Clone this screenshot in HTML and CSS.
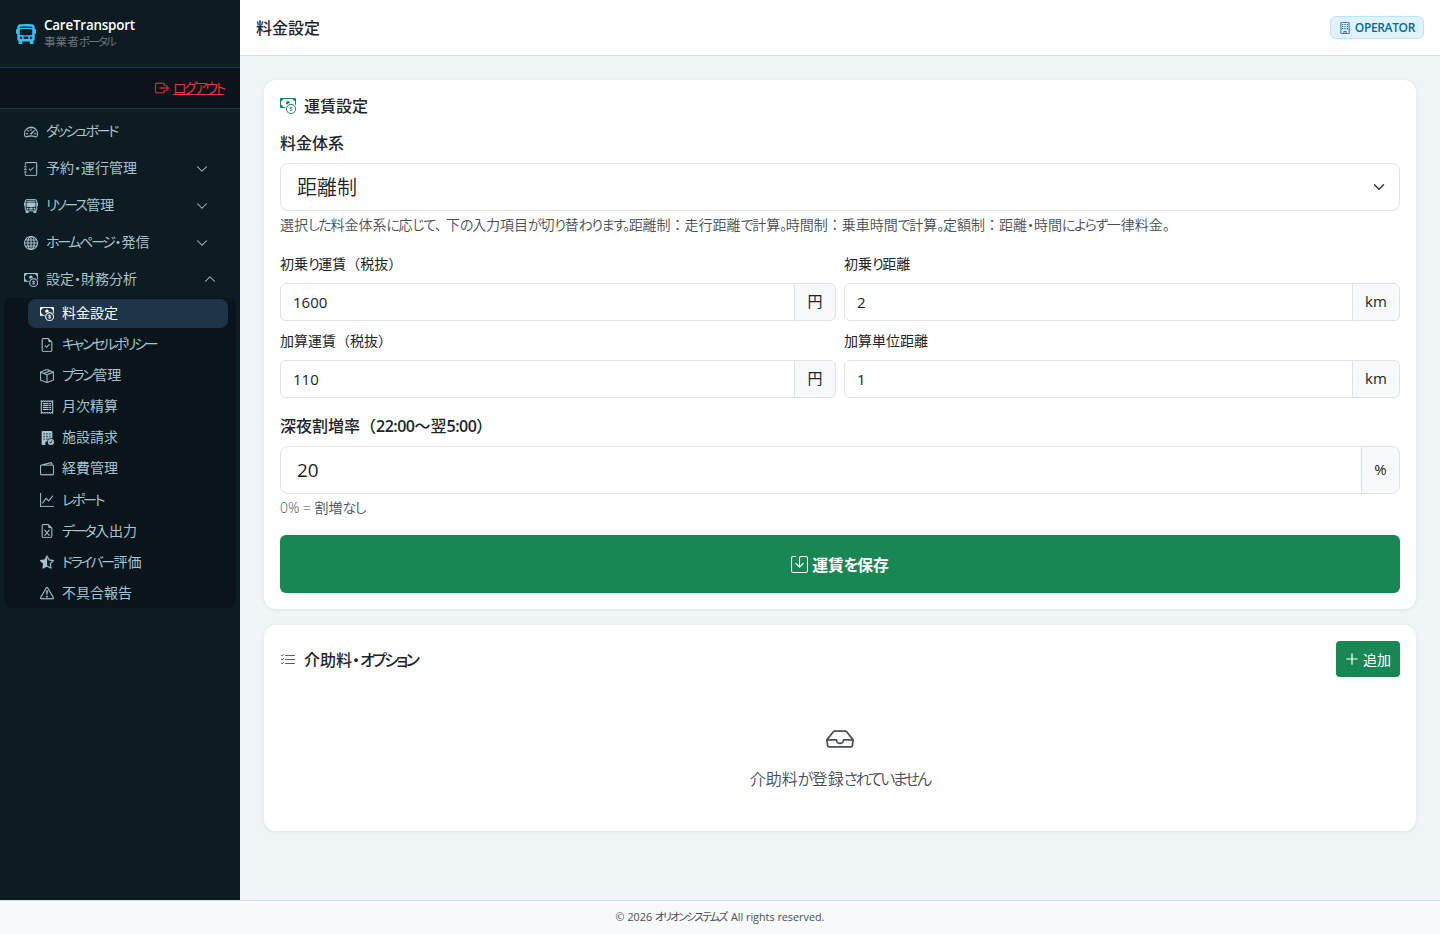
FILE: index.html
```
<!DOCTYPE html>
<html lang="ja">
  <head>
    <meta charset="UTF-8" />
    <meta name="viewport" content="width=device-width, initial-scale=1.0" />
    <title>料金設定 - CareTransport</title>
    <link rel="stylesheet" href="styles.css">
  </head>
  <body>
    <svg class="sprite" aria-hidden="true">
      <symbol id="bus-fill" viewBox="0 0 16 16"><path d="M16 7a1 1 0 0 1-1 1v3.5c0 .818-.393 1.544-1 2v2a.5.5 0 0 1-.5.5h-2a.5.5 0 0 1-.5-.5V14H5v1.5a.5.5 0 0 1-.5.5h-2a.5.5 0 0 1-.5-.5v-2a2.5 2.5 0 0 1-1-2V8a1 1 0 0 1-1-1V5a1 1 0 0 1 1-1V2.64C1 1.452 1.845.408 3.064.268A44 44 0 0 1 8 0c2.1 0 3.792.136 4.936.268C14.155.408 15 1.452 15 2.64V4a1 1 0 0 1 1 1zM3.552 3.22A43 43 0 0 1 8 3c1.837 0 3.353.107 4.448.22a.5.5 0 0 0 .104-.994A44 44 0 0 0 8 2c-1.876 0-3.426.109-4.552.226a.5.5 0 1 0 .104.994M8 4c-1.876 0-3.426.109-4.552.226A.5.5 0 0 0 3 4.723v3.554a.5.5 0 0 0 .448.497C4.574 8.891 6.124 9 8 9s3.426-.109 4.552-.226A.5.5 0 0 0 13 8.277V4.723a.5.5 0 0 0-.448-.497A44 44 0 0 0 8 4m-3 7a1 1 0 1 0-2 0 1 1 0 0 0 2 0m8 0a1 1 0 1 0-2 0 1 1 0 0 0 2 0m-7 0a1 1 0 0 0 1 1h2a1 1 0 1 0 0-2H7a1 1 0 0 0-1 1"/></symbol>
      <symbol id="bus" viewBox="0 0 16 16"><path d="M5 11a1 1 0 1 1-2 0 1 1 0 0 1 2 0m8 0a1 1 0 1 1-2 0 1 1 0 0 1 2 0m-6-1a1 1 0 1 0 0 2h2a1 1 0 1 0 0-2zm1-6c-1.876 0-3.426.109-4.552.226A.5.5 0 0 0 3 4.723v3.554a.5.5 0 0 0 .448.497C4.574 8.891 6.124 9 8 9s3.426-.109 4.552-.226A.5.5 0 0 0 13 8.277V4.723a.5.5 0 0 0-.448-.497A44 44 0 0 0 8 4m0-1c-1.837 0-3.353.107-4.448.22a.5.5 0 1 1-.104-.994A44 44 0 0 1 8 2c1.876 0 3.426.109 4.552.226a.5.5 0 1 1-.104.994A43 43 0 0 0 8 3"/><path d="M15 8a1 1 0 0 0 1-1V5a1 1 0 0 0-1-1V2.64c0-1.188-.845-2.232-2.064-2.372A44 44 0 0 0 8 0C5.9 0 4.208.136 3.064.268 1.845.408 1 1.452 1 2.64V4a1 1 0 0 0-1 1v2a1 1 0 0 0 1 1v3.5c0 .818.393 1.544 1 2v2a.5.5 0 0 0 .5.5h2a.5.5 0 0 0 .5-.5V14h6v1.5a.5.5 0 0 0 .5.5h2a.5.5 0 0 0 .5-.5v-2c.607-.456 1-1.182 1-2zM8 1c2.056 0 3.71.134 4.822.261.676.078 1.178.66 1.178 1.379v8.86a1.5 1.5 0 0 1-1.5 1.5h-9A1.5 1.5 0 0 1 2 11.5V2.64c0-.72.502-1.301 1.178-1.379A43 43 0 0 1 8 1"/></symbol>
      <symbol id="logout" viewBox="0 0 16 16"><path d="M10 12.5a.5.5 0 0 1-.5.5h-8a.5.5 0 0 1-.5-.5v-9a.5.5 0 0 1 .5-.5h8a.5.5 0 0 1 .5.5v2a.5.5 0 0 0 1 0v-2A1.5 1.5 0 0 0 9.5 2h-8A1.5 1.5 0 0 0 0 3.5v9A1.5 1.5 0 0 0 1.5 14h8a1.5 1.5 0 0 0 1.5-1.5v-2a.5.5 0 0 0-1 0z"/><path d="M15.854 8.354a.5.5 0 0 0 0-.708l-3-3a.5.5 0 0 0-.708.708L14.293 7.5H5.5a.5.5 0 0 0 0 1h8.793l-2.147 2.146a.5.5 0 0 0 .708.708z"/></symbol>
      <symbol id="speed" viewBox="0 0 16 16"><path d="M8 4a.5.5 0 0 1 .5.5V6a.5.5 0 0 1-1 0V4.5A.5.5 0 0 1 8 4M3.732 5.732a.5.5 0 0 1 .707 0l.915.914a.5.5 0 1 1-.708.708l-.914-.915a.5.5 0 0 1 0-.707M2 10a.5.5 0 0 1 .5-.5h1.586a.5.5 0 0 1 0 1H2.5A.5.5 0 0 1 2 10m9.5 0a.5.5 0 0 1 .5-.5h1.5a.5.5 0 0 1 0 1H12a.5.5 0 0 1-.5-.5m.754-4.246a.39.39 0 0 0-.527-.02L7.547 9.31a.91.91 0 1 0 1.302 1.258l3.434-4.297a.39.39 0 0 0-.029-.518z"/><path fill-rule="evenodd" d="M0 10a8 8 0 1 1 15.547 2.661c-.442 1.253-1.845 1.602-2.932 1.25C11.309 13.488 9.475 13 8 13c-1.474 0-3.31.488-4.615.911-1.087.352-2.49.003-2.932-1.25A8 8 0 0 1 0 10m8-7a7 7 0 0 0-6.603 9.329c.203.575.923.876 1.68.63C4.397 12.533 6.358 12 8 12s3.604.532 4.923.96c.757.245 1.477-.056 1.68-.631A7 7 0 0 0 8 3"/></symbol>
      <symbol id="journal" viewBox="0 0 16 16"><path d="M10.854 6.146a.5.5 0 0 1 0 .708l-3 3a.5.5 0 0 1-.708 0l-1.5-1.5a.5.5 0 1 1 .708-.708L7.5 8.793l2.646-2.647a.5.5 0 0 1 .708 0"/><path d="M3 0h10a2 2 0 0 1 2 2v12a2 2 0 0 1-2 2H3a2 2 0 0 1-2-2v-1h1v1a1 1 0 0 0 1 1h10a1 1 0 0 0 1-1V2a1 1 0 0 0-1-1H3a1 1 0 0 0-1 1v1H1V2a2 2 0 0 1 2-2"/><path d="M1 5v-.5a.5.5 0 0 1 1 0V5h.5a.5.5 0 0 1 0 1h-2a.5.5 0 0 1 0-1zm0 3v-.5a.5.5 0 0 1 1 0V8h.5a.5.5 0 0 1 0 1h-2a.5.5 0 0 1 0-1zm0 3v-.5a.5.5 0 0 1 1 0v.5h.5a.5.5 0 0 1 0 1h-2a.5.5 0 0 1 0-1z"/></symbol>
      <symbol id="globe" viewBox="0 0 16 16"><g fill="none" stroke="currentColor" stroke-width="1.2"><circle cx="8" cy="8" r="7.4"/><ellipse cx="8" cy="8" rx="3.7" ry="7.4"/><path d="M8 .5v15M.5 8h15M1.7 4.5h12.6M1.7 11.5h12.6"/></g></symbol>
      <symbol id="cash" viewBox="0 0 16 16"><path fill-rule="evenodd" d="M11 15a4 4 0 1 0 0-8 4 4 0 0 0 0 8m5-4a5 5 0 1 1-10 0 5 5 0 0 1 10 0"/><path d="M9.438 11.944c.047.596.518 1.06 1.363 1.116v.44h.375v-.443c.875-.061 1.386-.529 1.386-1.207 0-.618-.39-.936-1.09-1.1l-.296-.07v-1.2c.376.043.614.248.671.532h.658c-.047-.575-.54-1.024-1.329-1.073V8.5h-.375v.45c-.747.073-1.255.522-1.255 1.158 0 .562.378.92 1.007 1.066l.248.061v1.272c-.384-.058-.639-.27-.696-.563h-.668zm1.36-1.354c-.369-.085-.569-.26-.569-.522 0-.294.216-.514.572-.578v1.1zm.432.746c.449.104.655.272.655.569 0 .339-.257.571-.709.614v-1.195z"/><path d="M1 0a1 1 0 0 0-1 1v8a1 1 0 0 0 1 1h4.083q.088-.517.258-1H3a2 2 0 0 0-2-2V3a2 2 0 0 0 2-2h10a2 2 0 0 0 2 2v3.528c.38.34.717.728 1 1.154V1a1 1 0 0 0-1-1z"/><path d="M9.998 5.083 10 5a2 2 0 1 0-3.132 1.65 6 6 0 0 1 3.13-1.567"/></symbol>
      <symbol id="file-check" viewBox="0 0 16 16"><path d="M10.854 7.854a.5.5 0 0 0-.708-.708L7.5 9.793 6.354 8.646a.5.5 0 1 0-.708.708l1.5 1.5a.5.5 0 0 0 .708 0z"/><path d="M14 14V4.5L9.5 0H4a2 2 0 0 0-2 2v12a2 2 0 0 0 2 2h8a2 2 0 0 0 2-2M9.5 3A1.5 1.5 0 0 0 11 4.5h2V14a1 1 0 0 1-1 1H4a1 1 0 0 1-1-1V2a1 1 0 0 1 1-1h5.5z"/></symbol>
      <symbol id="file-excel" viewBox="0 0 16 16"><path d="M5.884 6.68a.5.5 0 1 0-.768.64L7.349 10l-2.233 2.68a.5.5 0 0 0 .768.64L8 10.781l2.116 2.54a.5.5 0 0 0 .768-.641L8.651 10l2.233-2.68a.5.5 0 0 0-.768-.64L8 9.219l-2.116-2.54z"/><path d="M14 14V4.5L9.5 0H4a2 2 0 0 0-2 2v12a2 2 0 0 0 2 2h8a2 2 0 0 0 2-2M9.5 3A1.5 1.5 0 0 0 11 4.5h2V14a1 1 0 0 1-1 1H4a1 1 0 0 1-1-1V2a1 1 0 0 1 1-1h5.5z"/></symbol>
      <symbol id="box" viewBox="0 0 16 16"><path d="M8.186 1.113a.5.5 0 0 0-.372 0L1.846 3.5l2.404.961L10.404 2zm3.564 1.426L5.596 5 8 5.961 14.154 3.5zm3.25 1.7-6.5 2.6v7.922l6.5-2.6V4.24zM7.5 14.762V6.838L1 4.239v7.923zM7.443.184a1.5 1.5 0 0 1 1.114 0l7.129 2.852A.5.5 0 0 1 16 3.5v8.662a1 1 0 0 1-.629.928l-7.185 2.874a.5.5 0 0 1-.372 0L.63 13.09a1 1 0 0 1-.63-.928V3.5a.5.5 0 0 1 .314-.464z"/></symbol>
      <symbol id="receipt" viewBox="0 0 16 16"><path fill="none" stroke="currentColor" stroke-width="1.3" d="M1.5 1l1 .8 1.4-.8 1.4.8 1.4-.8 1.3.8 1.3-.8 1.4.8 1.4-.8 1.4.8 1-.8v14l-1-.8-1.4.8-1.4-.8-1.4.8-1.3-.8-1.3.8-1.4-.8-1.4.8-1.4-.8-1 .8z"/><path d="M3.4 3.43h6.3v1.14H3.4zm0 2.28h6.3v1.15H3.4zm0 2.29h6.3v1.14H3.4zm0 2.29h6.3v1.14H3.4zM10.6 3.43h2v1.14h-2zm0 2.28h2v1.15h-2zm0 2.29h2v1.14h-2zm0 2.29h2v1.14h-2z"/></symbol>
      <symbol id="building" viewBox="0 0 16 16"><path fill="none" stroke="currentColor" stroke-width="1.2" d="M2.5 1A.5.5 0 0 1 3 .5h10a.5.5 0 0 1 .5.5v14a.5.5 0 0 1-.5.5H3a.5.5 0 0 1-.5-.5zM6.5 15v-2.500h3V15"/><path d="M4 2.500h1.700V4H4zm3.200 0h1.700V4H7.200zm3.200 0H12V4h-1.600zM4 5.200h1.700v1.500H4zm3.200 0h1.700v1.500H7.200zm3.200 0H12v1.500h-1.600zM4 8h1.700v1.500H4zm3.200 0h1.700v1.500H7.200zm3.200 0H12v1.500h-1.600z"/></symbol>
      <symbol id="building-check" viewBox="0 0 16 16"><path fill-rule="evenodd" d="M3 0a1 1 0 0 0-1 1v14a1 1 0 0 0 1 1h3v-3.500a.5.5 0 0 1 .5-.5H8A4.500 4.500 0 0 1 14 8.300V1a1 1 0 0 0-1-1zM4 2.500h1.500V4H4zm3.200 0h1.600V4H7.200zm3.300 0H12V4h-1.500zM4 5.500h1.500V7H4zm3.200 0h1.600V7H7.200zm3.300 0H12V7h-1.500zM4 8.500h1.500V10H4zm3.200 0h1.600V10H7.200z"/><path fill-rule="evenodd" d="M12.500 16a3.500 3.500 0 1 0 0-7 3.500 3.500 0 0 0 0 7m1.679-4.493-1.335 2.226a.75.75 0 0 1-1.174.144l-.774-.773a.5.5 0 0 1 .708-.708l.547.548 1.170-1.951a.5.5 0 1 1 .858.514"/></symbol>
      <symbol id="wallet" viewBox="0 0 16 16"><path d="M12.136.326A1.5 1.5 0 0 1 14 1.78V3h.5A1.5 1.5 0 0 1 16 4.5v9a1.5 1.5 0 0 1-1.5 1.5h-13A1.5 1.5 0 0 1 0 13.5v-9a1.5 1.5 0 0 1 1.432-1.499zM5.562 3H13V1.78a.5.5 0 0 0-.621-.484zM1.5 4a.5.5 0 0 0-.5.5v9a.5.5 0 0 0 .5.5h13a.5.5 0 0 0 .5-.5v-9a.5.5 0 0 0-.5-.5z"/></symbol>
      <symbol id="graph" viewBox="0 0 16 16"><path fill-rule="evenodd" d="M0 0h1v15h15v1H0zm14.817 3.113a.5.5 0 0 1 .07.704l-4.5 5.5a.5.5 0 0 1-.74.037L7.06 6.767l-3.656 5.027a.5.5 0 0 1-.808-.588l4-5.5a.5.5 0 0 1 .758-.06l2.609 2.61 4.15-5.073a.5.5 0 0 1 .704-.07"/></symbol>
      <symbol id="star" viewBox="0 0 16 16"><path d="M5.354 5.119 7.538.792A.52.52 0 0 1 8 .5c.183 0 .366.097.465.292l2.184 4.327 4.898.696A.54.54 0 0 1 16 6.32a.55.55 0 0 1-.17.445l-3.523 3.356.83 4.73c.078.443-.36.79-.746.592L8 13.187l-4.389 2.256a.5.5 0 0 1-.146.05c-.342.06-.668-.254-.6-.642l.83-4.73L.173 6.765a.55.55 0 0 1-.172-.403.6.6 0 0 1 .085-.302.51.51 0 0 1 .37-.245zM8 12.027a.5.5 0 0 1 .232.056l3.686 1.894-.694-3.957a.56.56 0 0 1 .162-.505l2.907-2.77-4.052-.576a.53.53 0 0 1-.393-.288L8.001 2.223 8 2.226z"/></symbol>
      <symbol id="warning" viewBox="0 0 16 16"><path d="M7.938 2.016A.13.13 0 0 1 8.002 2a.13.13 0 0 1 .063.016.15.15 0 0 1 .054.057l6.857 11.667c.036.06.035.124.002.183a.2.2 0 0 1-.054.06.1.1 0 0 1-.066.017H1.146a.1.1 0 0 1-.066-.017.2.2 0 0 1-.054-.06.18.18 0 0 1 .002-.183L7.884 2.073a.15.15 0 0 1 .054-.057m1.044-.45a1.13 1.13 0 0 0-1.96 0L.165 13.233c-.457.778.091 1.767.98 1.767h13.713c.889 0 1.438-.99.98-1.767z"/><path d="M7.002 12a1 1 0 1 1 2 0 1 1 0 0 1-2 0M7.1 5.995a.905.905 0 1 1 1.8 0l-.35 3.507a.552.552 0 0 1-1.1 0z"/></symbol>
      <symbol id="chevron" viewBox="0 0 16 16"><path fill="none" stroke="currentColor" stroke-linecap="round" stroke-linejoin="round" d="m2 5 6 6 6-6"/></symbol>
      <symbol id="save" viewBox="0 0 16 16"><path d="M2 1a1 1 0 0 0-1 1v12a1 1 0 0 0 1 1h12a1 1 0 0 0 1-1V2a1 1 0 0 0-1-1H9.5a1 1 0 0 0-1 1v7.293l2.646-2.647a.5.5 0 0 1 .708.708l-3.5 3.5a.5.5 0 0 1-.708 0l-3.5-3.5a.5.5 0 1 1 .708-.708L7.5 9.293V2a2 2 0 0 1 2-2H14a2 2 0 0 1 2 2v12a2 2 0 0 1-2 2H2a2 2 0 0 1-2-2V2a2 2 0 0 1 2-2h2.5a.5.5 0 0 1 0 1z"/></symbol>
      <symbol id="list-check" viewBox="0 0 16 16"><path fill="none" stroke="currentColor" stroke-linecap="round" stroke-linejoin="round" d="M5.5 3.5h9m-9 4h9m-9 4h9M1.5 3.500l.5.5 1.500-1.500m-2 5 .5.5 1.500-1.500m-2 5 .5.5 1.500-1.500"/></symbol>
      <symbol id="plus" viewBox="0 0 16 16"><path fill="none" stroke="currentColor" stroke-width="1.4" stroke-linecap="round" d="M8 2v12M2 8h12"/></symbol>
      <symbol id="inbox" viewBox="0 0 16 16"><path d="M4.98 4a.5.5 0 0 0-.39.188L1.54 8H6a.5.5 0 0 1 .5.5 1.5 1.5 0 1 0 3 0A.5.5 0 0 1 10 8h4.46l-3.05-3.812A.5.5 0 0 0 11.02 4zm9.954 5H10.45a2.5 2.5 0 0 1-4.9 0H1.066l.32 2.562a.5.5 0 0 0 .497.438h12.234a.5.5 0 0 0 .496-.438zM3.809 3.563A1.5 1.5 0 0 1 4.981 3h6.038a1.5 1.5 0 0 1 1.172.563l3.7 4.625a.5.5 0 0 1 .105.374l-.39 3.124A1.5 1.5 0 0 1 14.117 13H1.883a1.5 1.5 0 0 1-1.489-1.314l-.39-3.124a.5.5 0 0 1 .106-.374z"/></symbol>
    </svg>

    <div class="layout">
      <aside class="sidebar">
        <div class="brand">
          <svg class="brand-icon"><use href="#bus-fill"/></svg>
          <div>
            <div class="brand-name">CareTransport</div>
            <div class="brand-sub">事業者<span class="kana">ポータル</span></div>
          </div>
        </div>
        <div class="logout">
          <svg class="icon"><use href="#logout"/></svg>
          <a href="#" class="kana">ログアウト</a>
        </div>
        <nav class="nav">
          <a class="nav-item"><svg class="icon"><use href="#speed"/></svg><span class="kana">ダッシュボード</span></a>
          <a class="nav-item"><svg class="icon"><use href="#journal"/></svg><span>予約<span class="dot">・</span>運行管理</span><svg class="chevron"><use href="#chevron"/></svg></a>
          <a class="nav-item"><svg class="icon"><use href="#bus"/></svg><span><span class="kana">リソース</span>管理</span><svg class="chevron"><use href="#chevron"/></svg></a>
          <a class="nav-item"><svg class="icon"><use href="#globe"/></svg><span><span class="kana">ホームページ</span><span class="dot">・</span>発信</span><svg class="chevron"><use href="#chevron"/></svg></a>
          <a class="nav-item open"><svg class="icon"><use href="#cash"/></svg><span>設定<span class="dot">・</span>財務分析</span><svg class="chevron"><use href="#chevron"/></svg></a>
          <div class="subnav">
            <a class="sub-item active"><svg class="icon"><use href="#cash"/></svg><span>料金設定</span></a>
            <a class="sub-item"><svg class="icon"><use href="#file-check"/></svg><span class="kana">キャンセルポリシー</span></a>
            <a class="sub-item"><svg class="icon"><use href="#box"/></svg><span><span class="kana">プラン</span>管理</span></a>
            <a class="sub-item"><svg class="icon"><use href="#receipt"/></svg><span>月次精算</span></a>
            <a class="sub-item"><svg class="icon"><use href="#building-check"/></svg><span>施設請求</span></a>
            <a class="sub-item"><svg class="icon"><use href="#wallet"/></svg><span>経費管理</span></a>
            <a class="sub-item"><svg class="icon"><use href="#graph"/></svg><span class="kana">レポート</span></a>
            <a class="sub-item"><svg class="icon"><use href="#file-excel"/></svg><span><span class="kana">データ</span>入出力</span></a>
            <a class="sub-item"><svg class="icon"><use href="#star"/></svg><span><span class="kana">ドライバー</span>評価</span></a>
            <a class="sub-item"><svg class="icon"><use href="#warning"/></svg><span>不具合報告</span></a>
          </div>
        </nav>
      </aside>

      <div class="main">
        <header class="topbar">
          <h1>料金設定</h1>
          <span class="badge"><svg><use href="#building"/></svg>OPERATOR</span>
        </header>

        <main class="content">
          <form class="card fare-card">
            <h2 class="card-title"><svg><use href="#cash"/></svg>運賃設定</h2>

            <label class="label-lg">料金体系</label>
            <div class="select"><span>距離制</span><svg><use href="#chevron"/></svg></div>
            <p class="help help-long">選択<span class="hira">した</span>料金体系<span class="hira">に</span>応<span class="hira">じて</span><span class="comma">、</span>下<span class="hira">の</span>入力項目<span class="hira">が</span>切<span class="hira">り</span>替<span class="hira">わります。</span>距離制：走行距離<span class="hira">で</span>計算<span class="hira">。</span>時間制：乗車時間<span class="hira">で</span>計算<span class="hira">。</span>定額制：距離<span class="dot">・</span>時間<span class="hira">によらず</span>一律料金<span class="hira">。</span></p>

            <div class="fields">
              <div class="field">
                <label>初乗<span class="kana">り</span>運賃（税抜）</label>
                <div class="input-group"><input type="text" value="1600" /><span class="unit">円</span></div>
              </div>
              <div class="field">
                <label>初乗<span class="kana">り</span>距離</label>
                <div class="input-group"><input type="text" value="2" /><span class="unit unit-km">km</span></div>
              </div>
              <div class="field">
                <label>加算運賃（税抜）</label>
                <div class="input-group"><input type="text" value="110" /><span class="unit">円</span></div>
              </div>
              <div class="field">
                <label>加算単位距離</label>
                <div class="input-group"><input type="text" value="1" /><span class="unit unit-km">km</span></div>
              </div>
            </div>

            <label class="label-lg label-night">深夜割増率（<span class="time">22:00</span>～翌<span class="time">5:00</span>）</label>
            <div class="input-group input-group-lg"><input type="text" value="20" /><span class="unit unit-pct">%</span></div>
            <p class="help">0% = 割増<span class="hira">なし</span></p>

            <button type="button" class="btn btn-save"><svg><use href="#save"/></svg><span>運賃<span class="kana">を</span>保存</span></button>
          </form>

          <section class="card option-card">
            <div class="option-head">
              <h2 class="card-title"><svg><use href="#list-check"/></svg><span>介助料<span class="dot">・</span><span class="kana">オプション</span></span></h2>
              <button type="button" class="btn btn-add"><svg><use href="#plus"/></svg>追加</button>
            </div>
            <div class="empty">
              <svg><use href="#inbox"/></svg>
              <p>介助料<span class="kana">が</span>登録<span class="kana">されていません</span></p>
            </div>
          </section>
        </main>
      </div>
    </div>

    <footer class="footer">© 2026 <span class="kana">オリオンシステムズ</span> All rights reserved.</footer>
  </body>
</html>
```
FILE: styles.css
```
* {
  box-sizing: border-box;
}
body {
  margin: 0;
  font-family: "Open Sans", "Noto Sans CJK JP", sans-serif;
  font-size: 16px;
  line-height: 1.5;
  color: #212529;
  background: #eff4f7;
}
h1,
h2,
p {
  margin: 0;
}
svg {
  fill: currentColor;
  flex: none;
}
.sprite {
  display: none;
}
.kana {
  font-feature-settings: "palt";
  letter-spacing: -0.165em;
  margin-right: 0.06em;
}
.hira {
  font-feature-settings: "palt";
  letter-spacing: -0.1em;
}
.comma {
  letter-spacing: -0.2em;
}
.dot {
  font-feature-settings: "palt";
  letter-spacing: 0;
}
.layout {
  display: flex;
  height: 900px;
}

/* Sidebar */
.sidebar {
  width: 240px;
  background: #0d1b22;
  color: #a5c4cf;
}
.brand {
  display: flex;
  align-items: center;
  gap: 8px;
  height: 68px;
  padding: 0 16px;
  border-bottom: 1px solid #1e3447;
}
.brand-icon {
  width: 20px;
  height: 20px;
  color: #38bdf8;
}
.brand-name {
  font-size: 13.4px;
  font-weight: 600;
  line-height: 17px;
  letter-spacing: -0.2px;
  color: #fff;
}
.brand-sub {
  font-size: 11.6px;
  line-height: 16px;
  color: #6c757d;
}
.logout {
  display: flex;
  align-items: center;
  justify-content: flex-end;
  gap: 4px;
  height: 41px;
  padding: 0 15px 1px 16px;
  background: #0a141a;
  border-bottom: 1px solid #1e3447;
  font-size: 14px;
  color: #dc3545;
}
.logout a {
  color: inherit;
}
.icon {
  width: 14px;
  height: 14px;
  stroke: currentColor;
  stroke-width: 0.25;
}
.nav {
  padding: 4px;
}
.nav-item {
  display: flex;
  align-items: center;
  gap: 8px;
  height: 37px;
  padding: 0 28px 0 20px;
  font-size: 14px;
}
.nav-item > span,
.sub-item > span {
  padding-bottom: 2px;
}
.chevron {
  width: 12px;
  height: 12px;
  margin-left: auto;
  stroke-width: 1.4;
}
.open {
  padding-right: 20px;
}
.open .chevron {
  margin-bottom: 2px;
  transform: rotate(180deg);
}
.subnav {
  padding: 1px 8px 0 24px;
  background: #09151b;
  border-radius: 6px;
}
.sub-item {
  display: flex;
  align-items: center;
  gap: 8px;
  height: 29px;
  margin-bottom: 2.1px;
  padding: 0 12px;
  border-radius: 8px;
  font-size: 14px;
}
.sub-item.active {
  background: #1e3548;
  color: #fff;
}

/* Top bar */
.main {
  flex: 1;
}
.topbar {
  display: flex;
  align-items: center;
  justify-content: space-between;
  height: 56px;
  padding: 0 16px;
  background: #fff;
  border-bottom: 1px solid #d3e0ea;
}
.topbar h1 {
  font-size: 16px;
  font-weight: 500;
}
.badge {
  display: flex;
  align-items: center;
  gap: 4px;
  height: 23px;
  padding: 0 8px;
  background: #e0f2fe;
  border: 1px solid #bae6fd;
  border-radius: 6px;
  font-size: 12px;
  font-weight: 600;
  letter-spacing: -0.36px;
  color: #0369a1;
}
.badge svg {
  width: 12px;
  height: 12px;
}

/* Cards */
.content {
  padding: 24px;
}
.card {
  padding: 16px;
  background: #fff;
  border-radius: 12px;
  box-shadow: 0 1px 4px rgba(0, 0, 0, 0.07);
}
.fare-card {
  height: 529px;
  margin-bottom: 16px;
}
.option-card {
  height: 206px;
}
.card-title {
  display: flex;
  align-items: center;
  gap: 8px;
  height: 20px;
  font-size: 16px;
  font-weight: 500;
}
.card-title svg {
  width: 16px;
  height: 16px;
  color: #198754;
}
.label-lg {
  display: block;
  margin: 15px 0 8px;
  font-size: 16px;
  font-weight: 500;
  line-height: 24px;
}
.select {
  display: flex;
  align-items: center;
  justify-content: space-between;
  height: 48px;
  padding: 0 14px 0 16px;
  border: 1px solid #dee2e6;
  border-radius: 8px;
  font-size: 20px;
  font-weight: 350;
}
.select span {
  padding-top: 2px;
}
.select svg {
  width: 12px;
  height: 12px;
  stroke-width: 2;
  color: #343a40;
}
.help {
  margin-top: 3px;
  font-size: 14px;
  line-height: 21px;
  font-weight: 350;
  color: #495057;
}
.help-long {
  white-space: nowrap;
}
.fields {
  display: grid;
  grid-template-columns: 1fr 1fr;
  gap: 8px;
  margin-top: 18px;
}
.field {
  height: 69px;
}
.field label {
  display: block;
  margin-bottom: 9px;
  font-size: 14px;
  line-height: 21px;
}
.input-group {
  display: flex;
  height: 38px;
}
.input-group input {
  flex: 1;
  min-width: 0;
  padding: 0 12px;
  border: 1px solid #dee2e6;
  border-radius: 6px 0 0 6px;
  background: #fff;
  font: inherit;
  font-size: 15px;
  color: #212529;
}
.unit {
  display: flex;
  align-items: center;
  justify-content: center;
  width: 42px;
  margin-left: -1px;
  padding-bottom: 1px;
  border: 1px solid #dee2e6;
  border-radius: 0 6px 6px 0;
  background: #f8f9fa;
  font-size: 15px;
}
.unit-km {
  width: 48px;
}
.unit-pct {
  width: 39px;
}
.label-night {
  margin: 15px 0 8px;
}
.time {
  font-weight: 600;
  letter-spacing: -0.5px;
}
.input-group-lg {
  height: 48px;
}
.input-group-lg input {
  padding: 0 16px;
  border-radius: 8px 0 0 8px;
  font-size: 19px;
}
.input-group-lg .unit {
  border-radius: 0 8px 8px 0;
}
.btn {
  display: flex;
  align-items: center;
  justify-content: center;
  gap: 4px;
  border: none;
  border-radius: 6px;
  background: #198754;
  color: #fff;
  font-family: inherit;
}
.btn-save {
  width: 100%;
  height: 58px;
  margin-top: 17px;
  font-size: 15.8px;
  font-weight: 700;
}
.btn-save svg {
  width: 17px;
  height: 17px;
}
.option-head {
  display: flex;
  align-items: center;
  justify-content: space-between;
}
.option-head .card-title {
  padding-top: 1px;
}
.btn-add {
  width: 64px;
  height: 36px;
  border-radius: 4px;
  font-size: 14px;
}
.btn-add svg {
  width: 14px;
  height: 14px;
}
.empty {
  display: flex;
  flex-direction: column;
  align-items: center;
  padding-top: 48px;
  color: #495057;
}
.empty svg {
  width: 28px;
  height: 28px;
}
.empty p {
  margin-top: 14px;
  font-weight: 350;
}

.footer {
  height: 34px;
  padding-top: 7px;
  background: #f8f9fb;
  border-top: 1px solid #d0e3ea;
  font-size: 10.8px;
  line-height: 17px;
  text-align: center;
  color: #495057;
}
.footer .kana {
  margin-right: 0.15em;
}
```
